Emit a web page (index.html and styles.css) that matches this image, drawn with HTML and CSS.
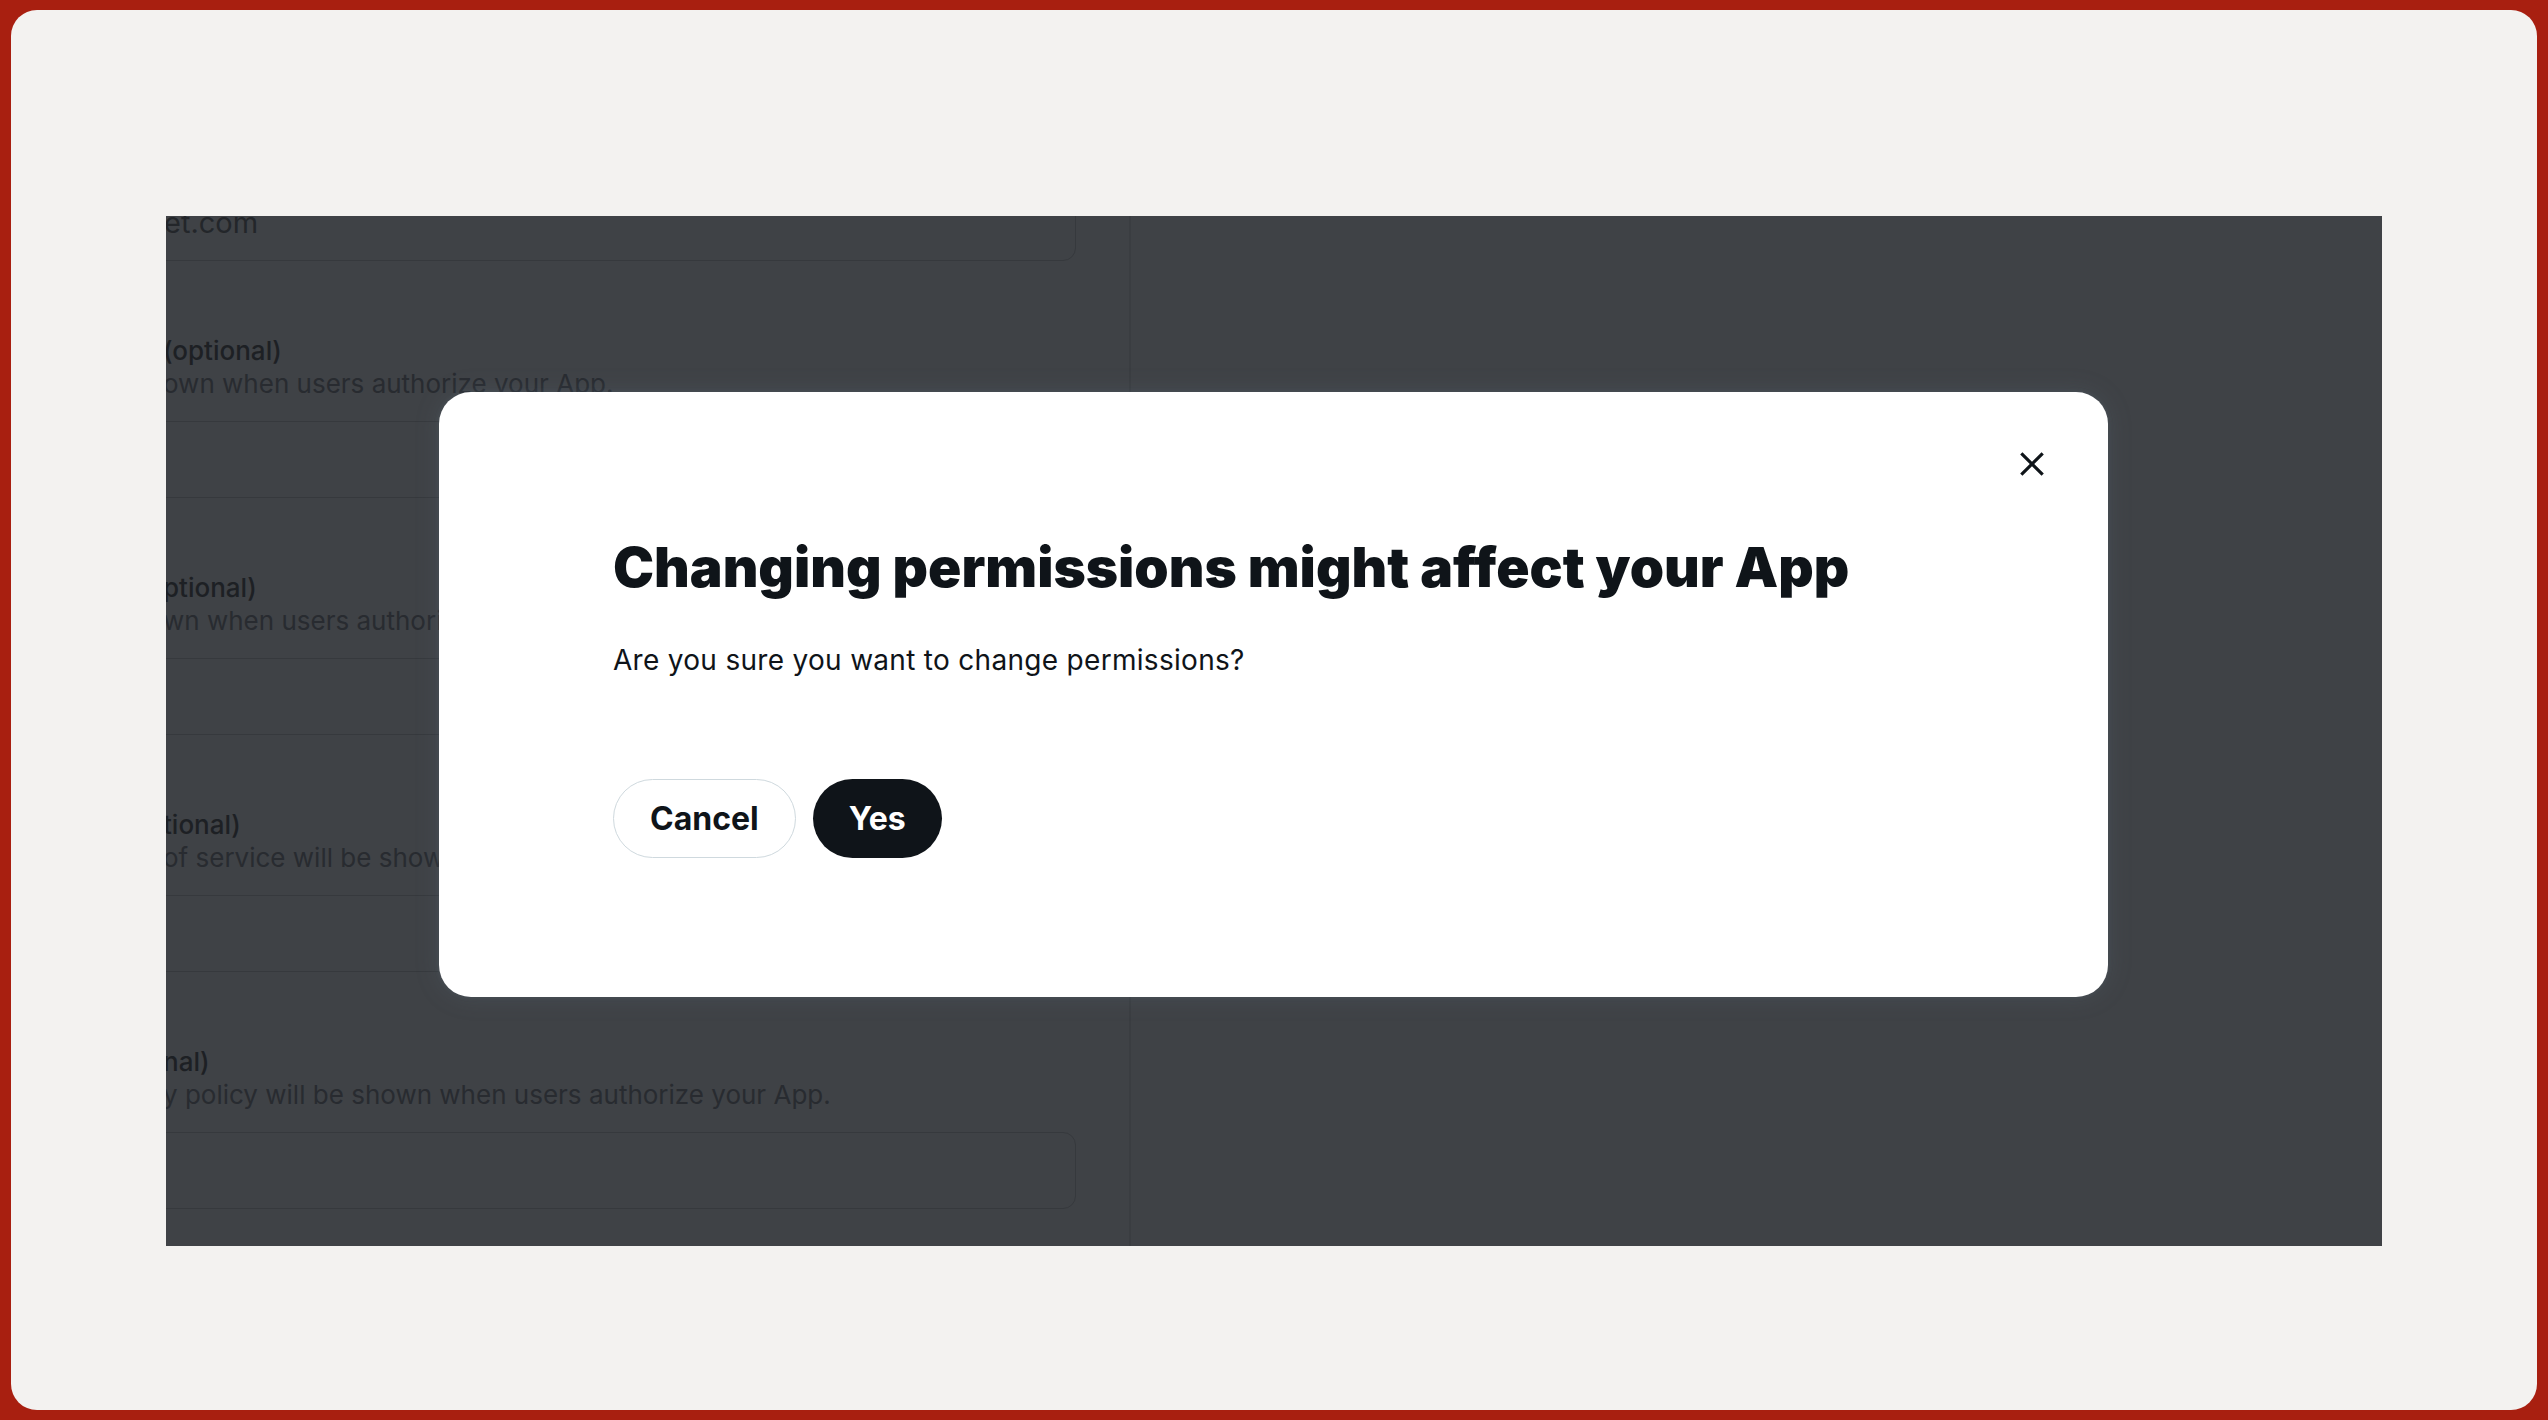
FILE: index.html
```html
<!DOCTYPE html>
<html lang="en">
<head>
<meta charset="utf-8">
<title>Changing permissions</title>
<link rel="stylesheet" href="styles.css">
</head>
<body>
<div class="screen">
  <div class="frame">
    <div class="page">
      <div class="left-col">
        <div class="input input-first"><span class="input-text">et.com</span></div>
        <div class="field">
          <div class="label">(optional)</div>
          <div class="hint">own when users authorize your App.</div>
          <div class="input"></div>
        </div>
        <div class="field">
          <div class="label">ptional)</div>
          <div class="hint">wn when users authorize your App.</div>
          <div class="input"></div>
        </div>
        <div class="field">
          <div class="label">tional)</div>
          <div class="hint">of service will be shown when users authorize your App.</div>
          <div class="input"></div>
        </div>
        <div class="field">
          <div class="label">nal)</div>
          <div class="hint">y policy will be shown when users authorize your App.</div>
          <div class="input"></div>
        </div>
      </div>
      <div class="right-col"></div>
    </div>

    <div class="modal" role="dialog">
      <button class="close" aria-label="Close">
        <svg viewBox="0 0 24 24" width="38" height="38"><path d="M10.59 12L4.54 5.96l1.42-1.42L12 10.59l6.04-6.05 1.42 1.42L13.41 12l6.05 6.04-1.42 1.42L12 13.41l-6.04 6.05-1.42-1.42L10.59 12z" fill="#0f1419"/></svg>
      </button>
      <h1 class="title">Changing permissions might affect your App</h1>
      <p class="text">Are you sure you want to change permissions?</p>
      <div class="actions">
        <button class="btn btn-outline">Cancel</button>
        <button class="btn btn-dark">Yes</button>
      </div>
    </div>
  </div>
</div>
</body>
</html>
```
FILE: styles.css
```css
* { box-sizing: border-box; }

html, body {
  margin: 0;
  padding: 0;
  height: 100%;
}

body {
  background: #a81f10;
  font-family: "Inter", "Noto Sans", "Liberation Sans", sans-serif;
  color: #0f1419;
  overflow: hidden;
}

.screen {
  margin: 10px 11px;
  height: 1400px;
  background: #f3f2f0;
  border-radius: 26px;
  padding: 206px 155px 164px 155px;
}

.frame {
  position: relative;
  height: 100%;
  background: #3f4246;
  overflow: hidden;
}

.page {
  display: flex;
  height: 100%;
}

.left-col {
  width: 965px;
  border-right: 2px solid #3a3d41;
  display: flex;
  flex-direction: column;
}

.right-col {
  flex: 1;
}

.input {
  height: 77px;
  width: 950px;
  margin-left: -40px;
  margin-top: 21px;
  border: 1px solid #36393d;
  border-radius: 13px;
  display: flex;
  align-items: center;
  padding-left: 37px;
}

.input-first {
  margin-top: -32px;
}

.input-text {
  font-size: 29px;
  line-height: 34px;
  color: #23262a;
}

.field {
  padding-top: 73px;
  margin-left: -3px;
}

.field .input {
  margin-left: -37px;
}

.label {
  font-size: 26px;
  line-height: 33px;
  font-weight: 500;
  color: #1d2024;
  white-space: nowrap;
}

.hint {
  font-size: 26px;
  line-height: 33px;
  color: #282b30;
  white-space: nowrap;
}

.modal {
  position: absolute;
  left: 273px;
  top: 176px;
  width: 1669px;
  background: #ffffff;
  border-radius: 32px;
  padding: 140px 174px 139px 174px;
  box-shadow: 0 0 24px rgba(101, 119, 134, 0.22), 0 0 4px 1px rgba(101, 119, 134, 0.15);
}

.close {
  position: absolute;
  top: 44px;
  right: 48px;
  width: 56px;
  height: 56px;
  border: 0;
  padding: 0;
  background: transparent;
  display: flex;
  align-items: center;
  justify-content: center;
  border-radius: 50%;
}

.title {
  margin: 0;
  font-size: 55px;
  line-height: 70px;
  font-weight: 900;
  letter-spacing: 0;
  color: #0f1419;
}

.text {
  margin: 40px 0 0 0;
  font-size: 28px;
  line-height: 36px;
  font-weight: 400;
  letter-spacing: 0.3px;
  color: #0f1419;
}

.actions {
  display: flex;
  gap: 17px;
  margin-top: 101px;
}

.btn {
  height: 79px;
  border-radius: 40px;
  padding: 0 36px;
  font-family: "Inter", "Noto Sans", "Liberation Sans", sans-serif;
  font-size: 32px;
  font-weight: 700;
  display: flex;
  align-items: center;
  justify-content: center;
  cursor: pointer;
}

.btn-outline {
  background: #ffffff;
  border: 1px solid #cfd9de;
  color: #0f1419;
  padding: 0 36px;
}

.btn-dark {
  background: #0f1419;
  border: 0;
  color: #ffffff;
}
```
